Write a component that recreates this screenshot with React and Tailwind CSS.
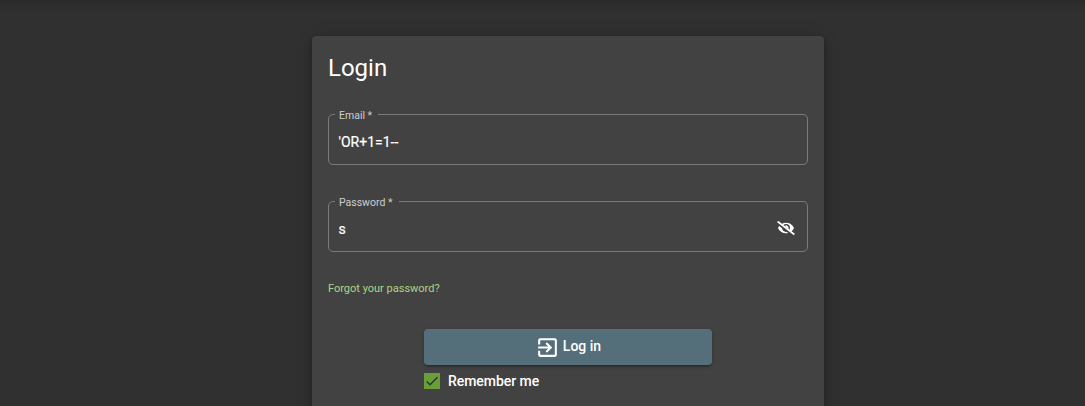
import { FaEyeSlash } from "react-icons/fa";
import { MdExitToApp } from "react-icons/md";

function OutlinedField({ label, labelWidth, children }) {
  return (
    <fieldset className="m-0 h-[57px] w-full min-w-0 rounded-[5px] border border-[#7b7b7b] px-1.5 pb-0">
      <legend
        className={`${labelWidth} h-[13px] whitespace-nowrap pl-1 text-[10.5px] leading-[15px] text-[#cecece]`}
      >
        {label}
      </legend>
      <div className="flex h-[41px] items-center justify-between pl-[3.5px] pr-1.5 text-sm text-white">
        {children}
      </div>
    </fieldset>
  );
}

export default function App() {
  return (
    <div className="flex h-[406px] w-full flex-col overflow-hidden bg-[#303030] font-['Roboto',sans-serif] text-white">
      <div className="h-9 shrink-0 bg-linear-to-b from-[#292929] to-[#303030] to-30%" />
      <main className="ml-[312px] h-[440px] w-[512px] shrink-0 rounded bg-[#424242] px-4 shadow-[0_3px_5px_-1px_rgba(0,0,0,0.2),0_6px_10px_0_rgba(0,0,0,0.14),0_1px_18px_0_rgba(0,0,0,0.12)]">
        <h1 className="pt-4 text-2xl leading-8">Login</h1>
        <div className="mt-6">
          <OutlinedField label="Email *" labelWidth="w-[43px]">
            <span className="[-webkit-text-stroke:0.2px_white]">'OR+1=1--</span>
          </OutlinedField>
        </div>
        <div className="mt-[30px]">
          <OutlinedField label="Password *" labelWidth="w-[64px]">
            <span className="[-webkit-text-stroke:0.2px_white]">s</span>
            <FaEyeSlash className="-mt-px h-3.5 w-[18px]" />
          </OutlinedField>
        </div>
        <a className="mt-[29px] block text-[11px] leading-4 text-[#aed581]">Forgot your password?</a>
        <div className="mt-8 pl-24">
          <button className="flex h-9 w-72 items-center justify-center gap-[3px] rounded bg-[#546e7a] text-sm font-medium shadow-[0_3px_1px_-2px_rgba(0,0,0,0.2),0_2px_2px_0_rgba(0,0,0,0.14),0_1px_5px_0_rgba(0,0,0,0.12)]">
            <MdExitToApp className="size-[25px]" />
            <span className="pb-0.5">Log in</span>
          </button>
          <div className="mt-2 flex h-4 items-center gap-2 text-sm font-medium">
            <span className="flex size-4 items-center justify-center bg-[#689f38]">
              <svg viewBox="0 0 24 24" className="size-4" fill="none" stroke="#303030" strokeWidth="2.1">
                <path d="M4.1 12.7 9 17.6 20.3 6.3" />
              </svg>
            </span>
            <span className="tracking-[-0.004em]">Remember me</span>
          </div>
        </div>
      </main>
    </div>
  );
}
